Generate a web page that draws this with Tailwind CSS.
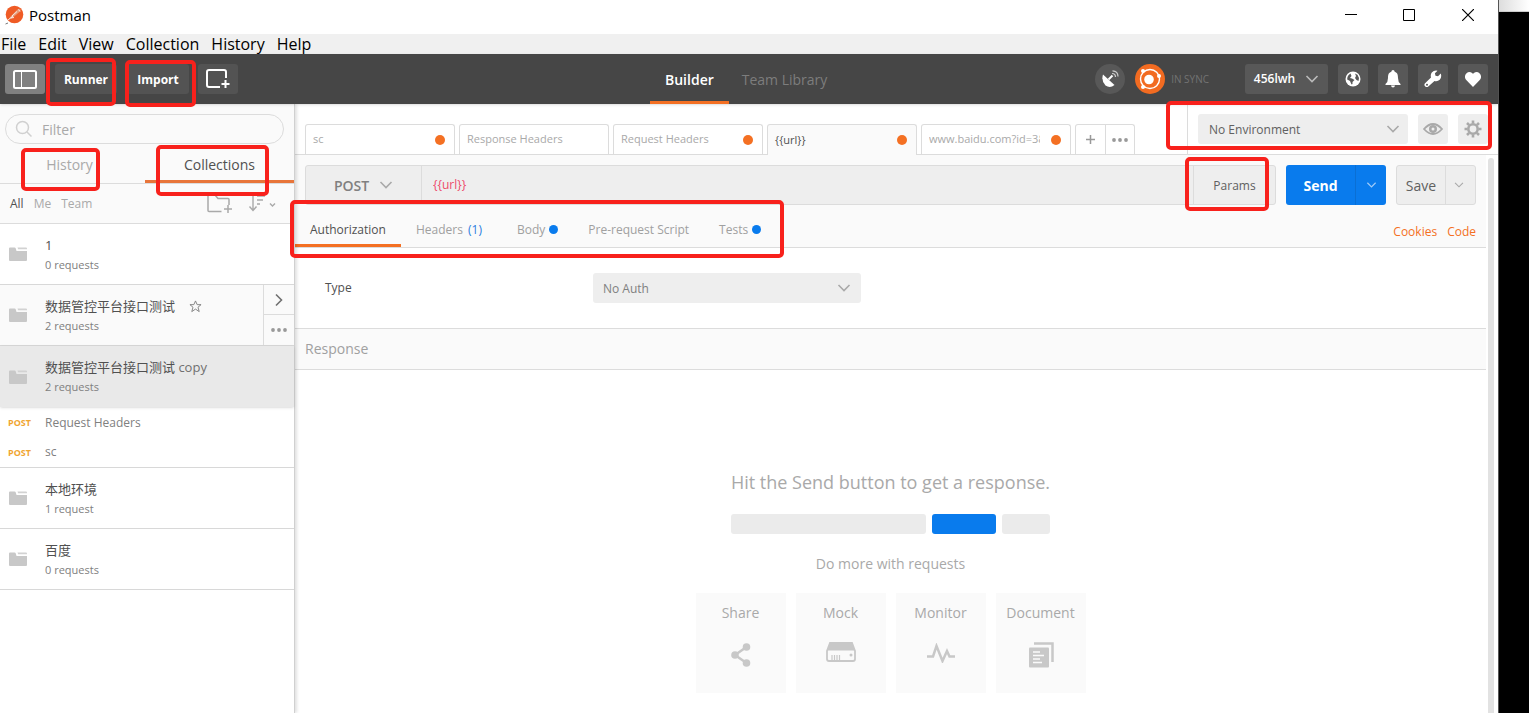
<!DOCTYPE html>
<html lang="en">
<head>
<meta charset="utf-8">
<title>Postman</title>
<script src="https://cdn.jsdelivr.net/npm/@tailwindcss/browser@4"></script>
</head>
<body class="relative flex h-screen overflow-hidden bg-white font-['Open_Sans','Noto_Sans_CJK_SC',sans-serif] text-[12px] text-[#505050]">
<svg class="hidden">
  <symbol id="chev" viewBox="0 0 14 8"><path d="M1.500 1l5.500 5.500L12.500 1" fill="none" stroke="currentColor" stroke-width="1.600"/></symbol>
  <symbol id="folder" viewBox="0 0 18 14"><path d="M0 1.500Q0 .5 1 .5h4.500q1 0 1.300 1L7.500 4H18v9q0 1-1 1H1q-1 0-1-1z" fill="#c8c8c8"/><path d="M8.500.5H17q1 0 1 1v.8H9.200z" fill="#d2d2d2"/></symbol>
  <symbol id="dots" viewBox="0 0 16 4"><circle cx="2" cy="2" r="1.900"/><circle cx="8" cy="2" r="1.900"/><circle cx="14" cy="2" r="1.900"/></symbol>
</svg>

<div class="flex min-w-0 flex-1 flex-col">
  <header class="flex h-[34px] shrink-0 items-center pl-[5px] text-[15px] text-black">
    <svg class="mr-1 mb-1 size-5 shrink-0" viewBox="0 0 20 20"><circle cx="9.500" cy="9.500" r="8.800" fill="#ef5b25"/><path d="M15.500 4.500a2 2 0 0 0-3 0L6 11l-3 4 5-2.500 7-6a1.500 1.500 0 0 0 .5-2z" fill="#e59a78"/><path d="M12 6.500L7 11M13.500 4.500l1.500 2M3 15l5-4M6 13l3-.5" stroke="#fff" stroke-width=".8" fill="none"/><path d="M.5 19l2.500-1" stroke="#777"/></svg>
    <h1 class="pb-[3px]">Postman</h1>
    <div class="mb-1 ml-auto flex text-black">
      <button aria-label="Minimize" class="flex h-[30px] w-[58px] items-center justify-center"><svg class="size-3" viewBox="0 0 12 12"><path d="M0 5.500h12" stroke="currentColor"/></svg></button>
      <button aria-label="Maximize" class="flex h-[30px] w-[58px] items-center justify-center"><svg class="size-3" viewBox="0 0 12 12"><path d="M.5.5h11v11H.5z" fill="none" stroke="currentColor"/></svg></button>
      <button aria-label="Close" class="flex h-[30px] w-[60px] items-center justify-center"><svg class="size-3" viewBox="0 0 12 12"><path d="M0 0l12 12M12 0L0 12" stroke="currentColor" stroke-width="1.200"/></svg></button>
    </div>
  </header>
  <nav class="flex h-5 shrink-0 items-center gap-3 bg-[#f0f0f0] pl-px text-[16px] leading-5 text-black">
    <button>File</button><button>Edit</button><button>View</button><button>Collection</button><button>History</button><button>Help</button>
  </nav>

  <div class="relative z-10 flex h-[50px] shrink-0 items-center bg-[#464646] pr-[10px] pl-[5px] text-white shadow">
    <div class="flex w-[645px] shrink items-center">
      <button aria-label="Toggle sidebar" class="flex h-[30px] w-10 items-center justify-center rounded-[3px] bg-[#808080]"><svg class="h-[19px] w-6" viewBox="0 0 24 19"><rect x="1" y="1" width="22" height="17" rx="1.500" fill="none" stroke="#fff" stroke-width="2"/><path d="M8.500 2v15" stroke="#fff"/></svg></button>
      <button class="ml-[10px] h-[30px] w-[62px] rounded-[3px] bg-[#535353] pt-[2px] text-[12px] font-bold">Runner</button>
      <button class="ml-[10px] h-[30px] w-[62px] rounded-[3px] bg-[#535353] pt-[2px] text-[12px] font-bold">Import</button>
      <button aria-label="New window" class="ml-[9px] flex h-[30px] w-10 items-center justify-center rounded-[3px] bg-[#535353]"><svg class="h-5 w-6" viewBox="0 0 24 20"><path d="M20 9V3q0-2-2-2H3Q1 1 1 3v13q0 2 2 2h11" fill="none" stroke="#fff" stroke-width="2"/><path d="M19.500 11v8M15.500 15h8" stroke="#fff" stroke-width="2"/></svg></button>
    </div>
    <button class="h-[50px] border-b-3 border-[#f47023] px-[15px] pt-1 text-[14px] font-semibold">Builder</button>
    <button class="h-[50px] border-b-3 border-transparent px-[13px] pt-1 text-[14px] text-[#7d7d7d]">Team Library</button>
    <div class="ml-auto flex items-center gap-[10px]">
      <button aria-label="Capture" class="flex size-[30px] items-center justify-center rounded-full bg-[#585858]"><svg class="size-[18px]" viewBox="0 0 18 18"><path d="M2 4.500L13.500 15Q9 18.500 4.500 15.500 0 11 2 4.500z" fill="#fff"/><path d="M7.500 9.500l4-4" stroke="#fff" stroke-width="2"/><path d="M11 3.500q3.500 0 3.500 3.500M11.500.8Q17 1 17 6.500" fill="none" stroke="#ccc" stroke-width="1.200"/></svg></button>
      <button class="-mr-[2px] flex items-center gap-[6px] text-[10px] text-[#737373]"><svg class="size-[30px]" viewBox="0 0 30 30"><circle cx="15" cy="15" r="15" fill="#f26b21"/><circle cx="15" cy="15" r="9.500" fill="none" stroke="#fff" stroke-width="1.400"/><circle cx="14" cy="15.500" r="4.800" fill="#fff"/><circle cx="8" cy="7" r="2" fill="#fff"/><circle cx="24" cy="12" r="2" fill="#fff"/><circle cx="8" cy="23" r="2" fill="#fff"/></svg>IN SYNC</button>
      <button class="ml-7 flex h-[30px] w-[83px] items-center justify-center gap-[10px] rounded-[3px] bg-[#585858] text-[12px] font-semibold">456lwh<svg class="h-2 w-[14px] text-[#bbb]"><use href="#chev"/></svg></button>
      <button aria-label="Network" class="flex size-[30px] items-center justify-center rounded-[3px] bg-[#585858]"><svg class="size-4" viewBox="0 0 16 16"><circle cx="8" cy="8" r="7.500" fill="#fff"/><path d="M5.500 2.500Q2 4.500 2.200 8.500L5 10l1.500 3.500 1-.5V11l2-2L7 7.500 5 7l1.500-2zM10 2.500l2.500 1.200L14 7l-.5 3-2-1L10 7l1-2z" fill="#585858"/></svg></button>
      <button aria-label="Notifications" class="flex size-[30px] items-center justify-center rounded-[3px] bg-[#585858]"><svg class="h-[18px] w-4" viewBox="0 0 16 18"><path d="M8 0q1.500 0 1.700 1.700C12.500 2.500 13 5 13 8q0 4 2.500 6v1H.5v-1Q3 12 3 8c0-3 .5-5.500 3.300-6.300Q6.500 0 8 0zM6 15.500h4q-.3 2-2 2t-2-2z" fill="#fff"/></svg></button>
      <button aria-label="Settings" class="flex size-[30px] items-center justify-center rounded-[3px] bg-[#585858]"><svg class="size-[18px]" viewBox="0 0 18 18"><path d="M16.800 3.500L14 6.300l-2.500-.6-.6-2.400L13.500.7Q10 0 7.800 2.500 6.200 4.800 7 7.500L.8 13.500q-1 1.800.5 3 1.500 1.200 3 0L10.500 11q3 .8 5.200-1.200 2.300-2.600 1.100-6.300z" fill="#fff"/><circle cx="3" cy="14.800" r="1" fill="#585858"/></svg></button>
      <button aria-label="Favourites" class="flex size-[30px] items-center justify-center rounded-[3px] bg-[#585858]"><svg class="h-[15px] w-4" viewBox="0 0 16 15"><path d="M8 15L1.500 8.300C-2 4.500 1 0 4.500 0 6.300 0 7.400 1 8 2c.6-1 1.700-2 3.500-2C15 0 18 4.500 14.500 8.300z" fill="#fff"/></svg></button>
    </div>
  </div>

  <div class="flex min-h-0 flex-1">
    <aside class="relative flex w-[295px] shrink-0 flex-col border-r border-[#d0d0d0] shadow-[2px_0_3px_rgba(0,0,0,0.12)]">
      <div class="bg-[#fafafa] pt-[10px]">
        <label class="mr-[10px] ml-[5px] flex h-[30px] items-center gap-[9px] rounded-full border border-[#dcdcdc] pl-[9px]">
          <svg class="size-[18px] shrink-0" viewBox="0 0 18 18"><circle cx="7.500" cy="7.500" r="6" fill="none" stroke="#d0d0d0" stroke-width="1.500"/><path d="M12 12l4.500 4.500" stroke="#d0d0d0" stroke-width="1.500"/></svg>
          <input type="text" aria-label="Filter" placeholder="Filter" class="w-full min-w-0 bg-transparent text-[14px] outline-none placeholder:text-[#a9a9a9]">
        </label>
        <div class="flex h-10 border-b border-[#dcdcdc] text-[14px]">
          <button class="h-[39px] w-[145px] border-b-3 border-transparent pt-1 pr-[6px] text-[#a9a9a9]">History</button>
          <button class="h-[39px] flex-1 border-b-3 border-[#e8753a] pt-1 text-[#505050]">Collections</button>
        </div>
        <div class="flex h-[40px] items-center gap-[10px] border-b border-[#dcdcdc] pl-[10px] text-[#a9a9a9]">
          <button class="text-[#505050]">All</button><button>Me</button><button>Team</button>
          <button aria-label="New collection" class="ml-auto"><svg class="h-5 w-[26px]" viewBox="0 0 26 20"><path d="M14.500 17.500H2q-1 0-1-1V2q0-1 1-1h6l3 3.500h10q1 0 1 1V11" fill="none" stroke="#a9a9a9" stroke-width="1.500"/><path d="M21 11v8M17 15h8" stroke="#a9a9a9" stroke-width="1.500"/></svg></button>
          <button aria-label="Sort" class="mr-[18px] ml-[5px]"><svg class="h-[18px] w-[28px]" viewBox="0 0 28 18"><path d="M5 0v15M1.500 11.500L5 15.500l3.500-4M9 1h8M9 5h6M9 9h3" fill="none" stroke="#a9a9a9" stroke-width="1.400"/><path d="M22 8.500l2.500 2.500L27 8.500" fill="none" stroke="#a9a9a9" stroke-width="1.400"/></svg></button>
        </div>
      </div>
      <ul>
        <li class="flex h-[61px] items-center gap-[18px] border-b border-[#d8d8d8] pl-[9px]"><svg class="h-[14px] w-[18px]"><use href="#folder"/></svg><div class="pt-[2px]"><p class="text-[13px] leading-5">1</p><p class="text-[11px] leading-5 text-[#808080]">0 requests</p></div></li>
        <li class="flex h-[61px] items-center gap-[18px] border-b border-[#d8d8d8] bg-[#fafafa] pl-[9px]"><svg class="h-[14px] w-[18px]"><use href="#folder"/></svg><div class="pt-[2px]"><p class="flex items-center gap-[14px] text-[13px] leading-5">数据管控平台接口测试<svg class="size-[13px]" viewBox="0 0 14 14"><path d="M7 1l1.800 4h4.200L9.700 7.800 11 12.500 7 9.800 3 12.500l1.300-4.700L1 5h4.200z" fill="none" stroke="#808080"/></svg></p><p class="text-[11px] leading-5 text-[#808080]">2 requests</p></div>
          <div class="ml-auto flex h-[60px] w-[31px] flex-col border-l border-[#dcdcdc]">
            <button aria-label="Open details" class="flex h-[30px] items-center justify-center border-b border-[#dcdcdc]"><svg class="h-[14px] w-2" viewBox="0 0 8 14"><path d="M1 1.500L6.500 7 1 12.500" fill="none" stroke="#707070" stroke-width="1.600"/></svg></button>
            <button aria-label="More" class="flex h-[30px] items-center justify-center"><svg class="h-1 w-4 fill-[#999]"><use href="#dots"/></svg></button>
          </div></li>
        <li class="flex h-[61px] items-center gap-[18px] bg-[#e9e9e9] pl-[9px] shadow"><svg class="h-[14px] w-[18px]"><use href="#folder"/></svg><div><p class="text-[13px] leading-5">数据管控平台接口测试 <span class="text-[#707070]">copy</span></p><p class="text-[11px] leading-5 text-[#808080]">2 requests</p></div></li>
        <li class="flex h-[61px] flex-col border-b border-[#d8d8d8] pt-px text-[#808080]">
          <a href="#" class="flex h-[30px] items-center pl-2"><span class="w-[37px] text-[9px] font-bold text-[#f0a530]">POST</span>Request Headers</a>
          <a href="#" class="flex h-[30px] items-center pl-2"><span class="w-[37px] text-[9px] font-bold text-[#f0a530]">POST</span>sc</a></li>
        <li class="flex h-[61px] items-center gap-[18px] border-b border-[#d8d8d8] pl-[9px]"><svg class="h-[14px] w-[18px]"><use href="#folder"/></svg><div class="pt-[2px]"><p class="text-[13px] leading-5">本地环境</p><p class="text-[11px] leading-5 text-[#808080]">1 request</p></div></li>
        <li class="flex h-[61px] items-center gap-[18px] border-b border-[#d8d8d8] pl-[9px]"><svg class="h-[14px] w-[18px]"><use href="#folder"/></svg><div class="pt-[2px]"><p class="text-[13px] leading-5">百度</p><p class="text-[11px] leading-5 text-[#808080]">0 requests</p></div></li>
      </ul>
    </aside>

    <main class="flex min-w-0 flex-1 flex-col">
      <div class="flex h-[51px] shrink-0 border-b border-[#dcdcdc]">
        <div class="flex items-end gap-1 pl-[10px] text-[11px] text-[#a9a9a9]">
          <button class="flex h-[30px] w-[150px] items-center justify-between rounded-t-[3px] border border-b-0 border-[#dcdcdc] pr-[9px] pl-[7px]">sc<i class="size-[10px] rounded-full bg-[#f47023]"></i></button>
          <button class="flex h-[30px] w-[150px] items-center justify-between rounded-t-[3px] border border-b-0 border-[#dcdcdc] pr-[9px] pl-[7px]">Response Headers</button>
          <button class="flex h-[30px] w-[150px] items-center justify-between rounded-t-[3px] border border-b-0 border-[#dcdcdc] pr-[9px] pl-[7px]">Request Headers<i class="size-[10px] rounded-full bg-[#f47023]"></i></button>
          <button class="-mb-px flex h-[31px] w-[150px] items-center justify-between rounded-t-[3px] border border-b-0 border-[#dcdcdc] bg-[#fafafa] pr-[9px] pl-[7px] text-[#505050]">{{url}}<i class="size-[10px] rounded-full bg-[#f47023]"></i></button>
          <button class="flex h-[30px] w-[150px] items-center justify-between rounded-t-[3px] border border-b-0 border-[#dcdcdc] pr-[9px] pl-[7px]"><span class="w-[111px] overflow-hidden text-left whitespace-nowrap">www.baidu.com?id=3&amp;</span><i class="size-[10px] rounded-full bg-[#f47023]"></i></button>
          <div class="flex h-[30px] w-[60px] rounded-t-[3px] border border-b-0 border-[#dcdcdc]">
            <button aria-label="New tab" class="flex flex-1 items-center justify-center border-r border-[#dcdcdc]"><svg class="size-[9px]" viewBox="0 0 9 9"><path d="M4.500 0v9M0 4.500h9" stroke="#999" stroke-width="1.500"/></svg></button>
            <button aria-label="Tab options" class="flex flex-1 items-center justify-center"><svg class="h-1 w-4 fill-[#999]"><use href="#dots"/></svg></button>
          </div>
        </div>
        <div class="ml-auto flex items-center gap-[10px] border-l border-[#dcdcdc] pr-[10px] pl-[10px]">
          <div class="relative h-[30px] w-[210px]">
            <select aria-label="Environment" class="size-full appearance-none rounded-[3px] bg-[#eee] pt-[2px] pl-[11px] text-[12px] text-[#606060]"><option>No Environment</option></select>
            <svg class="pointer-events-none absolute top-[11px] right-2 h-2 w-[14px] text-[#a9a9a9]"><use href="#chev"/></svg>
          </div>
          <button aria-label="Environment quick look" class="flex size-[30px] items-center justify-center rounded-[3px] bg-[#eee]"><svg class="h-3 w-5" viewBox="0 0 20 12"><path d="M1 6q9-10 18 0-9 10-18 0z" fill="none" stroke="#a9a9a9" stroke-width="1.800"/><circle cx="10" cy="6" r="4" fill="#a9a9a9"/><circle cx="10" cy="6" r="1.500" fill="#eee"/></svg></button>
          <button aria-label="Manage environments" class="flex size-[30px] items-center justify-center rounded-[3px] bg-[#eee]"><svg class="size-[18px]" viewBox="0 0 18 18"><circle cx="9" cy="9" r="4.700" fill="none" stroke="#a9a9a9" stroke-width="2.600"/><path d="M9 .5v3M9 14.500v3M.5 9h3M14.500 9h3M3 3l2.200 2.200M12.800 12.800L15 15M3 15l2.200-2.200M12.800 5.200L15 3" stroke="#a9a9a9" stroke-width="2.600"/></svg></button>
        </div>
      </div>

      <div class="flex min-h-0 flex-1">
        <div class="flex min-w-0 flex-1 flex-col">
          <section class="shrink-0 bg-[#fafafa] pt-[10px]">
            <div class="flex h-10 gap-[10px] pr-[10px] pl-[10px]">
              <div class="flex flex-1 rounded-[3px] border border-[#dcdcdc] bg-[#eee]">
                <button class="flex w-[116px] items-center justify-center gap-[10px] border-r border-[#dcdcdc] text-[14px] font-semibold text-[#808080]">POST<svg class="h-2 w-[14px] text-[#a9a9a9]"><use href="#chev"/></svg></button>
                <input type="text" aria-label="Request URL" value="{{url}}" class="min-w-0 flex-1 bg-transparent px-[11px] text-[12px] text-[#ed4b6b] outline-none">
                <button class="w-[82px] border-l border-[#dcdcdc] pt-[2px] text-[12px] text-[#606060]">Params</button>
              </div>
              <div class="flex w-[100px] rounded-[3px] bg-[#097bed] text-white">
                <button class="w-[69px] text-[14px] font-bold">Send</button>
                <button aria-label="Send options" class="flex flex-1 items-center justify-center border-l border-[#0a6fd4]"><svg class="h-[6px] w-[11px] text-[#9fcbf8]"><use href="#chev"/></svg></button>
              </div>
              <div class="flex w-20 rounded-[3px] border border-[#dcdcdc] bg-[#eee]">
                <button class="w-12 text-[14px] text-[#606060]">Save</button>
                <button aria-label="Save options" class="flex flex-1 items-center justify-center border-l border-[#dcdcdc] pr-1"><svg class="h-[6px] w-[10px] text-[#a9a9a9]"><use href="#chev"/></svg></button>
              </div>
            </div>
            <div class="flex h-[43px] border-b border-[#dcdcdc] pt-[10px] text-[12px] text-[#a0a0a0]">
              <button class="h-8 border-b-3 border-[#f47023] px-[15px] text-[#505050]">Authorization</button>
              <button class="h-8 border-b-3 border-transparent px-[15px]">Headers <span class="ml-[2px] text-[#2b7de0]">(1)</span></button>
              <button class="ml-[5px] flex h-8 items-center gap-1 border-b-3 border-transparent px-[15px]">Body<i class="size-[9px] rounded-full bg-[#097bed]"></i></button>
              <button class="h-8 border-b-3 border-transparent px-[15px]">Pre-request Script</button>
              <button class="flex h-8 items-center gap-1 border-b-3 border-transparent px-[15px]">Tests<i class="size-[9px] rounded-full bg-[#097bed]"></i></button>
              <div class="ml-auto flex h-8 items-center gap-[10px] pt-[2px] pr-[10px] text-[#f47023]"><a href="#">Cookies</a><a href="#">Code</a></div>
            </div>
          </section>
          <section class="flex h-20 shrink-0 items-center pl-[30px]">
            <label for="auth" class="w-[268px]">Type</label>
            <div class="relative h-[30px] w-[268px]">
              <select id="auth" class="size-full appearance-none rounded-[3px] bg-[#eee] pt-[2px] pl-[10px] text-[12px] text-[#808080]"><option>No Auth</option></select>
              <svg class="pointer-events-none absolute top-[11px] right-[10px] h-2 w-[14px] text-[#a9a9a9]"><use href="#chev"/></svg>
            </div>
          </section>
          <h2 class="flex h-[42px] shrink-0 items-center border-y border-[#dcdcdc] bg-[#fafafa] pb-[2px] pl-[10px] text-[14px] text-[#a0a0a0]">Response</h2>
          <section class="flex flex-col items-center pt-[98px] text-[#a9a9a9]">
            <p class="text-[18px] leading-7">Hit the Send button to get a response.</p>
            <div class="mt-[18px] flex h-5 gap-[6px]"><i class="w-[195px] rounded-[3px] bg-[#ebebeb]"></i><i class="w-16 rounded-[3px] bg-[#097bed]"></i><i class="w-12 rounded-[3px] bg-[#ebebeb]"></i></div>
            <p class="mt-5 text-[14px] leading-5">Do more with requests</p>
            <div class="mt-[19px] flex gap-[10px] text-[14px]">
              <button class="flex h-[100px] w-[90px] flex-col items-center bg-[#fafafa] pt-[10px] leading-5">Share<svg class="mt-5 h-6 w-5" viewBox="0 0 20 24"><path d="M15.500 4L4 12l11.500 8" fill="none" stroke="#c8c8c8" stroke-width="2.500"/><circle cx="15.500" cy="4" r="3.800" fill="#c8c8c8"/><circle cx="4" cy="12" r="3.800" fill="#c8c8c8"/><circle cx="15.500" cy="20" r="3.800" fill="#c8c8c8"/></svg></button>
              <button class="flex h-[100px] w-[90px] flex-col items-center bg-[#fafafa] pt-[10px] leading-5">Mock<svg class="mt-[19px] h-5 w-[30px]" viewBox="0 0 30 20"><path d="M4 1h22l3 8v8q0 2-2 2H3q-2 0-2-2V9z" fill="#fafafa" stroke="#c8c8c8" stroke-width="1.800"/><path d="M4 1h22l3 7.500H1z" fill="#c8c8c8"/><path d="M6 13v5M8.500 13v5M11 13v5M13.500 13v5" stroke="#c8c8c8" stroke-width="1.200"/><circle cx="25" cy="13" r="1.500" fill="#c8c8c8"/></svg></button>
              <button class="flex h-[100px] w-[90px] flex-col items-center bg-[#fafafa] pt-[10px] leading-5">Monitor<svg class="mt-5 h-5 w-[30px]" viewBox="0 0 30 20"><path d="M1 13.500h6L10.500 3l6 15 4.500-10 2.500 5.500H29" fill="none" stroke="#c8c8c8" stroke-width="2.500"/></svg></button>
              <button class="flex h-[100px] w-[90px] flex-col items-center bg-[#fafafa] pt-[10px] leading-5">Document<svg class="mt-[19px] h-[26px] w-[26px]" viewBox="0 0 26 26"><path d="M6 1.500h18.500V20" fill="none" stroke="#c8c8c8" stroke-width="2.500"/><rect x="1" y="5.500" width="20" height="20" rx="1" fill="#c8c8c8"/><path d="M5 10h7M5 13.500h11M5 17h7M5 20.500h9" stroke="#fafafa" stroke-width="1.500"/></svg></button>
            </div>
          </section>
        </div>
        <div class="mt-[3px] mr-1 ml-[2px] w-[6px] rounded-t-[3px] bg-[#e2e2e2]"></div>
      </div>
    </main>
  </div>
</div>

<div class="w-[31px] shrink-0 border-l border-[#555] bg-black"><div class="h-3 border-b border-[#ccc] bg-linear-to-r from-[#ddd] to-white"></div></div>

<!-- red annotation frames laid over the window -->
<div class="pointer-events-none absolute inset-0 z-20">
  <div class="absolute top-[58px] left-[46px] h-[48px] w-[70px] rounded-[5px] border-4 border-[#f8211c]"></div>
  <div class="absolute top-[60px] left-[125px] h-[47px] w-[71px] rounded-[5px] border-4 border-[#f8211c]"></div>
  <div class="absolute top-[148px] left-[21px] h-[43px] w-[79px] rounded-[5px] border-4 border-[#f8211c]"></div>
  <div class="absolute top-[145px] left-[156px] h-[51px] w-[113px] rounded-[5px] border-4 border-[#f8211c]"></div>
  <div class="absolute top-[200px] left-[290px] h-[58px] w-[494px] rounded-[5px] border-4 border-[#f8211c]"></div>
  <div class="absolute top-[157px] left-[1185px] h-[54px] w-[84px] rounded-[5px] border-4 border-[#f8211c]"></div>
  <div class="absolute top-[101px] left-[1166px] h-[49px] w-[326px] rounded-[5px] border-4 border-[#f8211c]"></div>
</div>
</body>
</html>
